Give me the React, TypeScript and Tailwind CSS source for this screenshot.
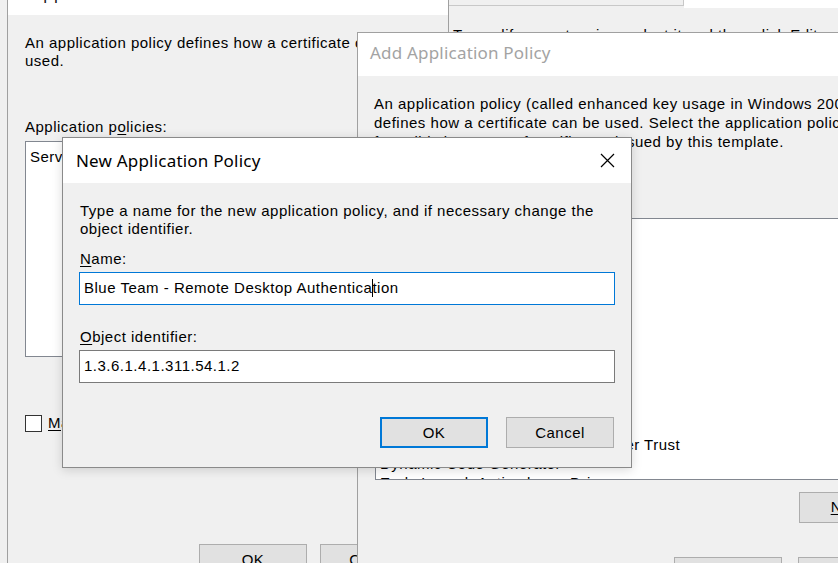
import React from "react"

const listItems = [
  "All application policies",
  "Any Purpose",
  "Attestation Identity Key Certificate",
  "Certificate Request Agent",
  "Client Authentication",
  "Code Signing",
  "CTL Usage",
  "Digital Rights",
  "Directory Service Email Replication",
  "Disallowed List",
  "Document Encryption",
  "Document Signing",
  "Domain Name System (DNS) Server Trust",
  "Dynamic Code Generator",
  "Early Launch Antimalware Driver",
  "Embedded Windows System Component Verification",
]

function WinButton({ children, primary = false }: { children: React.ReactNode; primary?: boolean }) {
  return (
    <div
      className={
        primary
          ? "flex h-[31px] w-[108px] items-center justify-center border-2 border-[#0078d7] bg-[#e1e1e1]"
          : "flex h-[31px] w-[108px] items-center justify-center border border-[#adadad] bg-[#e1e1e1]"
      }
    >
      {children}
    </div>
  )
}

function CloseIcon() {
  return (
    <svg width="15" height="15" viewBox="0 0 15 15" fill="none">
      <path d="M1 1L14 14M14 1L1 14" stroke="#000" strokeWidth="1.2" />
    </svg>
  )
}

export default function App() {
  return (
    <div className="relative h-[563px] w-[838px] overflow-hidden bg-[#f0f0f0] font-['Liberation_Sans',Arial,sans-serif] text-[15px] tracking-[0.5px] text-black">
      {/* back window: policies extension */}
      <div className="absolute left-[7px] top-[-30px] h-[640px] w-[460px] border-l border-[#a0a0a0] bg-[#f0f0f0]">
        <div className="flex h-[45px] items-center bg-white pl-[24px] font-['Noto_Sans',sans-serif] text-[17px] tracking-[0.2px] text-[#1a1a1a]">
          Application Policies Extension
        </div>
        <div className="pl-[17px] pt-[19px] leading-[18px]">
          <p className="whitespace-nowrap">
            An application policy defines how a certificate can be
            <br />
            used.
          </p>
          <p className="mt-[48px]">
            Application p<span className="underline underline-offset-[2px]">o</span>licies:
          </p>
          <div className="mt-[5px] h-[216px] w-[340px] border border-[#828790] bg-white pl-[4px] pt-[6px] whitespace-nowrap">
            Server Authentication
          </div>
          <div className="mt-[57px] flex items-center gap-[6px]">
            <div className="h-[17px] w-[17px] border border-[#333] bg-white" />
            <span className="whitespace-nowrap">
              <span className="underline underline-offset-[2px]">M</span>ake this extension critical
            </span>
          </div>
          <div className="ml-[174px] mt-[112px] flex gap-[13px]">
            <WinButton>OK</WinButton>
            <WinButton>Cancel</WinButton>
          </div>
        </div>
      </div>

      {/* properties window behind */}
      <div className="absolute left-[448px] top-0 h-[60px] w-[400px] border-l border-[#a0a0a0] bg-[#f0f0f0]">
        <div className="flex items-start">
          <div className="h-[6px] w-[235px] border-b border-r border-[#c8c8c8] bg-[#f0f0f0]" />
          <div className="h-[8px] flex-1 bg-white" />
        </div>
        <p className="mt-[18px] whitespace-nowrap pl-[4px] leading-[18px]">
          To modify an extension, select it and then click Edit.
        </p>
      </div>

      {/* add application policy */}
      <div className="absolute left-[357px] top-[32px] h-[560px] w-[600px] border border-[#a0a0a0] bg-[#f0f0f0]">
        <div className="flex h-[43px] items-center bg-white pb-[4px] pl-[12px] font-['Noto_Sans',sans-serif] text-[17px] tracking-[0.2px] text-[#a3a3a3]">
          Add Application Policy
        </div>
        <div className="pl-[16px] pt-[18px]">
          <p className="whitespace-nowrap leading-[19px]">
            An application policy (called enhanced key usage in Windows 2000)
            <br />
            defines how a certificate can be used. Select the application policy required
            <br />
            for valid signatures of certificates issued by this template.
          </p>
          <div className="ml-[1px] mt-[67px] h-[262px] w-[560px] overflow-hidden border border-[#828790] bg-white pl-[4px] leading-[19px]">
            <div className="-mt-[12px]">
              {listItems.map((item) => (
                <div key={item} className="whitespace-nowrap">
                  {item}
                </div>
              ))}
            </div>
          </div>
          <div className="ml-[425px] mt-[12px]">
            <WinButton>
              <span>
                <span className="underline underline-offset-[2px]">N</span>ew...
              </span>
            </WinButton>
          </div>
          <div className="ml-[300px] mt-[34px] flex gap-[16px]">
            <WinButton>OK</WinButton>
            <WinButton>Cancel</WinButton>
          </div>
        </div>
      </div>

      {/* new application policy dialog */}
      <div className="absolute left-[62px] top-[137px] h-[331px] w-[570px] border border-[#8a8a8a] bg-[#f0f0f0] shadow-[0_2px_10px_rgba(0,0,0,0.15)]">
        <div className="flex h-[45px] items-center justify-between bg-white pl-[13px] pr-[16px]">
          <span className="font-['Noto_Sans',sans-serif] text-[17px] tracking-[0.2px] text-black">New Application Policy</span>
          <CloseIcon />
        </div>
        <div className="pl-[17px] pr-[17px] pt-[19px] leading-[18px]">
          <p className="whitespace-nowrap">
            Type a name for the new application policy, and if necessary change the
            <br />
            object identifier.
          </p>
          <p className="mt-[12px]">
            <span className="underline underline-offset-[2px]">N</span>ame:
          </p>
          <div className="-ml-[1px] mt-[4px] flex h-[33px] w-[536px] items-center border border-[#0078d7] bg-white pb-[2px] pl-[4px] whitespace-nowrap">
            Blue Team - Remote Desktop Authentica
            <span className="mx-[-0.5px] inline-block h-[18px] w-[1px] bg-black" />
            tion
          </div>
          <p className="mt-[23px]">
            <span className="underline underline-offset-[2px]">O</span>bject identifier:
          </p>
          <div className="-ml-[1px] mt-[4px] flex h-[33px] w-[536px] items-center border border-[#7a7a7a] bg-white pb-[2px] pl-[4px]">
            1.3.6.1.4.1.311.54.1.2
          </div>
          <div className="mt-[34px] flex justify-end gap-[18px]">
            <WinButton primary>OK</WinButton>
            <WinButton>Cancel</WinButton>
          </div>
        </div>
      </div>
    </div>
  )
}
